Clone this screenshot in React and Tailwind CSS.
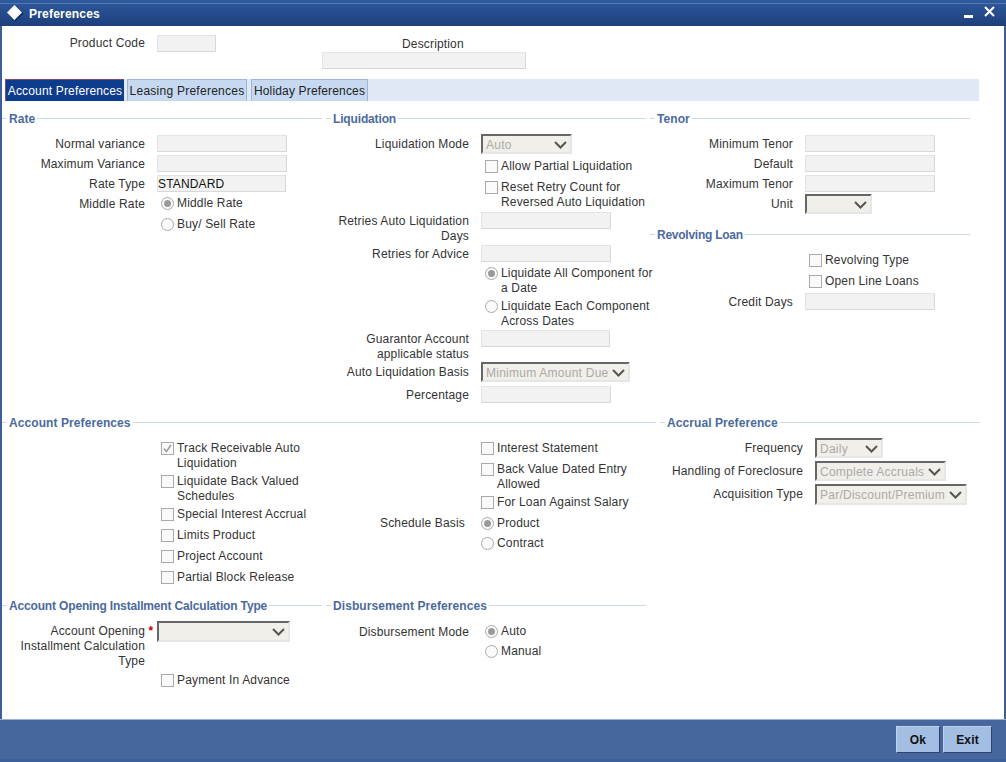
function Input({ className = "w-[130px]", value = "" }) {
  return (
    <input
      readOnly
      value={value}
      className={`h-[17px] ${className} bg-[#f2f2f2] border border-[#e4e4e4] border-r-[#d8d8d8] border-b-[#d8d8d8] px-0 text-[12px] leading-[15px] text-[#111] outline-none`}
    />
  );
}
function Chevron() {
  return (
    <svg width="13" height="8" viewBox="0 0 13 8" className="absolute right-[3px] top-[5px]">
      <path d="M1 1 L6.5 6.5 L12 1" fill="none" stroke="#555" strokeWidth="2" />
    </svg>
  );
}
function Select({ className, value = "" }) {
  return (
    <div className={`relative box-border ${className} bg-[#f1efe9] border-t-2 border-l-2 border-t-[#666] border-l-[#666] border-r-2 border-b-2 border-r-[#e6e6e6] border-b-[#e6e6e6] pl-[3px] text-[12px] leading-[19px] tracking-[0.25px] text-[#aaa] whitespace-nowrap overflow-hidden`}>
      {value}
      <Chevron />
    </div>
  );
}
function Label({ children, className = "pt-[2px]" }) {
  return <div className={`w-[143px] shrink-0 whitespace-nowrap text-right leading-[15px] text-[#333] ${className}`}>{children}</div>;
}
function Row({ label, labelClass, rowClass = "", children }) {
  return (
    <div className={`flex items-start gap-[12px] ${rowClass}`}>
      <Label className={labelClass}>{label}</Label>
      {children}
    </div>
  );
}
function Box({ checked }) {
  return (
    <span className="mt-px flex h-[13px] w-[13px] shrink-0 items-center justify-center border border-[#aaa] bg-[#fafafa]">
      {checked && (
        <svg width="9" height="9" viewBox="0 0 9 9">
          <path d="M1 4.5 L3.5 7.5 L8 1" fill="none" stroke="#999" strokeWidth="1.4" />
        </svg>
      )}
    </span>
  );
}
function Radio({ checked }) {
  return (
    <span className="mt-px flex h-[13px] w-[13px] shrink-0 items-center justify-center rounded-full border border-[#aaa] bg-[#fafafa]">
      {checked && <span className="h-[7px] w-[7px] rounded-full bg-[#9a9a9a]" />}
    </span>
  );
}
function Option({ type = "box", checked, className = "", children }) {
  return (
    <div className={`flex gap-[3px] leading-[15px] text-[#333] ${className}`}>
      {type === "box" ? <Box checked={checked} /> : <Radio checked={checked} />}
      <span className="whitespace-pre">{children}</span>
    </div>
  );
}
function Heading({ children, className = "", textClass = "tracking-[0.08px]" }) {
  return (
    <div className={`flex h-[16px] items-center gap-[2px] ${className}`}>
      <span className="h-px w-[5px] bg-[#cdd8e8]" />
      <span className={`translate-y-[1px] font-bold leading-[15px] text-[#4a6a9e] whitespace-nowrap ${textClass}`}>{children}</span>
      <span className="h-px flex-1 bg-[#cdd8e8]" />
    </div>
  );
}

export default function App() {
  return (
    <div className="flex h-[762px] w-[1006px] flex-col overflow-hidden bg-[#3d5f9b] text-[12px] tracking-[0.16px] text-[#333] [font-family:'Liberation_Sans',Arial,sans-serif]">
      {/* title */}
      <div className="h-[26px] shrink-0 bg-gradient-to-b from-[#2f5a9e] to-[#1d3f7c] pt-[3px]">
        <div className="box-border flex h-[23px] items-center border-t border-t-[#5276ae] pb-[3px] pl-[7px] pr-[11px]">
          <svg width="17" height="17" viewBox="0 0 17 17" className="shrink-0">
            <path d="M9 1 L16.5 8.5 L9 16 L1.5 8.5 Z" fill="#0e2a5c" />
            <path d="M7.5 0 L15 7.5 L7.5 15 L0 7.5 Z" fill="#fff" />
          </svg>
          <span className="ml-[5px] font-bold tracking-[0.2px] text-white">Preferences</span>
          <div className="ml-auto flex items-center gap-[11px]">
            <span className="mt-[5px] h-[3px] w-[9px] bg-white" />
            <svg width="11" height="11" viewBox="0 0 11 11" className="-mt-[4px]">
              <path d="M1 1 L10 10 M10 1 L1 10" stroke="#fff" strokeWidth="2" />
            </svg>
          </div>
        </div>
      </div>

      {/* body */}
      <div className="mx-[2px] flex h-[693px] shrink-0 flex-col bg-white">
        {/* header */}
        <div className="flex h-[53px] shrink-0 pt-[9px]">
          <Row label="Product Code" labelClass="pt-px">
            <Input className="w-[59px]" />
          </Row>
          <div className="ml-[106px] flex w-[204px] flex-col">
            <div className="h-[17px] pl-[80px] pt-[2px] leading-[15px]">Description</div>
            <Input className="w-[204px]" />
          </div>
        </div>

        {/* tabs */}
        <div className="mx-[3px] flex h-[22px] w-[974px] shrink-0 bg-[#e1e8f5]">
          <div className="flex w-[119px] items-center justify-center border-l border-t border-l-[#8a4a5e] border-t-[#8a4a5e] bg-[#0d3c8c] pt-px text-white">Account Preferences</div>
          <div className="ml-[3px] flex w-[120px] items-center justify-center border border-b-0 border-[#9fb4d4] bg-[#c6d9f1] pt-px tracking-[0.25px] text-[#222]">Leasing Preferences</div>
          <div className="ml-[4px] flex w-[117px] items-center justify-center border border-b-0 border-[#9fb4d4] bg-[#c6d9f1] pt-px text-[#222]">Holiday Preferences</div>
        </div>

        {/* upper sections */}
        <div className="mt-[9px] grid h-[304px] shrink-0 grid-cols-[324px_324px_320px]">
          <div className="pr-[4px]">
            <Heading>Rate</Heading>
            <Row label="Normal variance" rowClass="mt-[9px]"><Input /></Row>
            <Row label="Maximum Variance" rowClass="mt-[3px]"><Input /></Row>
            <Row label="Rate Type" rowClass="mt-[3px]"><Input className="w-[129px]" value="STANDARD" /></Row>
            <Row label="Middle Rate" rowClass="mt-[3px]"><Option type="radio" checked className="pl-[4px] pt-px">Middle Rate</Option></Row>
            <Option type="radio" className="ml-[159px] mt-[5px]">Buy/ Sell Rate</Option>
          </div>
          <div className="pr-[4px]">
            <Heading textClass="tracking-[-0.15px]">Liquidation</Heading>
            <Row label="Liquidation Mode" labelClass="pt-[3px]" rowClass="mt-[8px]"><Select className="h-[20px] w-[91px]" value="Auto" /></Row>
            <Option className="ml-[159px] mt-[5px]">Allow Partial Liquidation</Option>
            <Option className="ml-[159px] mt-[6px]">{"Reset Retry Count for\nReversed Auto Liquidation"}</Option>
            <Row label={<>Retries Auto Liquidation<br />Days</>} rowClass="mt-[2px]"><Input /></Row>
            <Row label="Retries for Advice" rowClass="mt-px"><Input /></Row>
            <Option type="radio" checked className="ml-[159px] mt-[4px]">{"Liquidate All Component for\na Date"}</Option>
            <Option type="radio" className="ml-[159px] mt-[3px]">{"Liquidate Each Component\nAcross Dates"}</Option>
            <Row label={<>Guarantor Account<br />applicable status</>} rowClass="mt-px"><Input className="w-[129px]" /></Row>
            <Row label="Auto Liquidation Basis" labelClass="pt-[3px]" rowClass="mt-0"><Select className="h-[20px] w-[149px]" value="Minimum Amount Due" /></Row>
            <Row label="Percentage" rowClass="mt-[4px]"><Input /></Row>
          </div>
          <div>
            <Heading>Tenor</Heading>
            <Row label="Minimum Tenor" rowClass="mt-[9px]"><Input /></Row>
            <Row label="Default" rowClass="mt-[3px]"><Input /></Row>
            <Row label="Maximum Tenor" rowClass="mt-[3px]"><Input /></Row>
            <Row label="Unit" labelClass="pt-[3px]" rowClass="mt-[2px]"><Select className="h-[20px] w-[67px]" /></Row>
            <Heading className="mt-[12px]" textClass="tracking-[-0.25px]">Revolving Loan</Heading>
            <Option className="ml-[159px] mt-[11px]">Revolving Type</Option>
            <Option className="ml-[159px] mt-[6px]">Open Line Loans</Option>
            <Row label="Credit Days" rowClass="mt-[4px]"><Input /></Row>
          </div>
        </div>

        {/* middle sections */}
        <div className="grid h-[183px] shrink-0 grid-cols-[658px_320px]">
          <div className="pr-[4px]">
            <Heading>Account Preferences</Heading>
            <div className="mt-[11px] grid grid-cols-[324px_1fr]">
              <div>
                <Option checked className="ml-[159px]">{"Track Receivable Auto\nLiquidation"}</Option>
                <Option className="ml-[159px] mt-[3px]">{"Liquidate Back Valued\nSchedules"}</Option>
                <Option className="ml-[159px] mt-[3px]">Special Interest Accrual</Option>
                <Option className="ml-[159px] mt-[6px]">Limits Product</Option>
                <Option className="ml-[159px] mt-[6px]">Project Account</Option>
                <Option className="ml-[159px] mt-[6px]">Partial Block Release</Option>
              </div>
              <div>
                <Option className="ml-[155px]">Interest Statement</Option>
                <Option className="ml-[155px] mt-[6px]">{"Back Value Dated Entry\nAllowed"}</Option>
                <Option className="ml-[155px] mt-[3px]">For Loan Against Salary</Option>
                <div className="mt-[6px] flex items-start">
                  <div className="w-[139px] shrink-0 text-right leading-[15px]">Schedule Basis</div>
                  <Option type="radio" checked className="ml-[16px]">Product</Option>
                </div>
                <Option type="radio" className="ml-[155px] mt-[5px]">Contract</Option>
              </div>
            </div>
          </div>
          <div>
            <Heading>Accrual Preference</Heading>
            <Row label="Frequency" labelClass="pt-[3px]" rowClass="mt-[8px]"><Select className="h-[20px] w-[68px]" value="Daily" /></Row>
            <Row label="Handling of Foreclosure" labelClass="pt-[3px]" rowClass="mt-[3px]"><Select className="h-[20px] w-[131px]" value="Complete Accruals" /></Row>
            <Row label="Acquisition Type" labelClass="pt-[3px]" rowClass="mt-[3px]"><Select className="h-[21px] w-[152px]" value="Par/Discount/Premium" /></Row>
          </div>
        </div>

        {/* lower sections */}
        <div className="grid grid-cols-[324px_324px]">
          <div className="pr-[4px]">
            <Heading textClass="tracking-[-0.16px]">Account Opening Installment Calculation Type</Heading>
            <div className="mt-[8px] flex items-start">
              <Label className="pt-[3px]">Account Opening<br />Installment Calculation<br />Type</Label>
              <span className="w-[12px] shrink-0 pt-[3px] text-center font-bold leading-[15px] text-[#c00]">*</span>
              <Select className="h-[21px] w-[133px]" />
            </div>
            <Option className="ml-[159px] mt-[4px]">Payment In Advance</Option>
          </div>
          <div className="pr-[4px]">
            <Heading>Disbursement Preferences</Heading>
            <Row label="Disbursement Mode" rowClass="mt-[10px]"><Option type="radio" checked className="pl-[4px] pt-px">Auto</Option></Row>
            <Option type="radio" className="ml-[159px] mt-[4px]">Manual</Option>
          </div>
        </div>
      </div>

      {/* footer */}
      <div className="flex h-[40px] shrink-0 items-start justify-end gap-[3px] border-t border-t-[#9db0cf] bg-[#47669e] pr-[14px] pt-[6px]">
        <button className="h-[27px] w-[44px] border border-[#c0d2ea] border-r-[#2c446f] border-b-[#2c446f] bg-[#a3bee3] text-[12px] font-bold text-[#111]">Ok</button>
        <button className="h-[27px] w-[49px] border border-[#c0d2ea] border-r-[#2c446f] border-b-[#2c446f] bg-[#a3bee3] text-[12px] font-bold text-[#111]">Exit</button>
      </div>
    </div>
  );
}
